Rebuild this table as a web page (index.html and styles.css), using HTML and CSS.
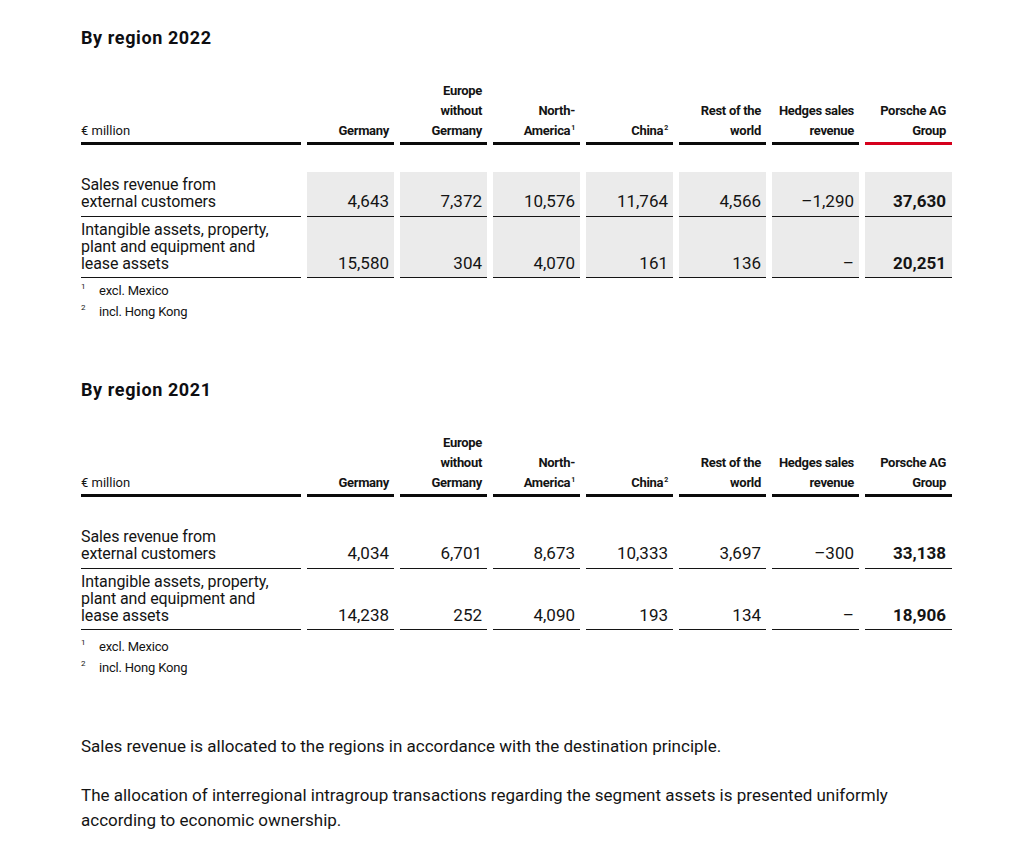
FILE: index.html
```html
<!DOCTYPE html>
<html lang="en">
<head>
<meta charset="utf-8">
<title>By region</title>
<link rel="stylesheet" href="styles.css">
</head>
<body>
<main class="page">
  <section class="region">
    <h2 class="title">By region 2022</h2>
    <div class="row head">
      <div class="cell label"><span>€ million</span></div>
      <div class="cell"><span>Germany</span></div>
      <div class="cell"><span>Europe<br>without<br>Germany</span></div>
      <div class="cell"><span>North-<br>America<sup>1</sup></span></div>
      <div class="cell"><span>China<sup>2</sup></span></div>
      <div class="cell"><span>Rest of the<br>world</span></div>
      <div class="cell"><span>Hedges sales<br>revenue</span></div>
      <div class="cell total red"><span>Porsche AG<br>Group</span></div>
    </div>
    <div class="row body first">
      <div class="cell label">Sales revenue from<br>external customers</div>
      <div class="cell shade">4,643</div>
      <div class="cell shade">7,372</div>
      <div class="cell shade">10,576</div>
      <div class="cell shade">11,764</div>
      <div class="cell shade">4,566</div>
      <div class="cell shade">–1,290</div>
      <div class="cell shade total">37,630</div>
    </div>
    <div class="row body">
      <div class="cell label">Intangible assets, property,<br>plant and equipment and<br>lease assets</div>
      <div class="cell shade">15,580</div>
      <div class="cell shade">304</div>
      <div class="cell shade">4,070</div>
      <div class="cell shade">161</div>
      <div class="cell shade">136</div>
      <div class="cell shade">–</div>
      <div class="cell shade total">20,251</div>
    </div>
    <ul class="notes">
      <li><span class="mark">1</span>excl. Mexico</li>
      <li><span class="mark">2</span>incl. Hong Kong</li>
    </ul>
  </section>

  <section class="region second">
    <h2 class="title">By region 2021</h2>
    <div class="row head">
      <div class="cell label"><span>€ million</span></div>
      <div class="cell"><span>Germany</span></div>
      <div class="cell"><span>Europe<br>without<br>Germany</span></div>
      <div class="cell"><span>North-<br>America<sup>1</sup></span></div>
      <div class="cell"><span>China<sup>2</sup></span></div>
      <div class="cell"><span>Rest of the<br>world</span></div>
      <div class="cell"><span>Hedges sales<br>revenue</span></div>
      <div class="cell total"><span>Porsche AG<br>Group</span></div>
    </div>
    <div class="row body first">
      <div class="cell label">Sales revenue from<br>external customers</div>
      <div class="cell">4,034</div>
      <div class="cell">6,701</div>
      <div class="cell">8,673</div>
      <div class="cell">10,333</div>
      <div class="cell">3,697</div>
      <div class="cell">–300</div>
      <div class="cell total">33,138</div>
    </div>
    <div class="row body">
      <div class="cell label">Intangible assets, property,<br>plant and equipment and<br>lease assets</div>
      <div class="cell">14,238</div>
      <div class="cell">252</div>
      <div class="cell">4,090</div>
      <div class="cell">193</div>
      <div class="cell">134</div>
      <div class="cell">–</div>
      <div class="cell total">18,906</div>
    </div>
    <ul class="notes later">
      <li><span class="mark">1</span>excl. Mexico</li>
      <li><span class="mark">2</span>incl. Hong Kong</li>
    </ul>
  </section>

  <section class="text">
    <p>Sales revenue is allocated to the regions in accordance with the destination principle.</p>
    <p>The allocation of interregional intragroup transactions regarding the segment assets is presented uniformly<br>according to economic ownership.</p>
  </section>
</main>
</body>
</html>
```

FILE: styles.css
```css
html, body {
  margin: 0;
  padding: 0;
  background: #ffffff;
}

body {
  font-family: Roboto, "Liberation Sans", Arial, sans-serif;
  color: #141414;
}

.page {
  padding: 28px 0 0 81px;
}

.title {
  margin: 0;
  font-size: 18px;
  line-height: 20px;
  font-weight: 700;
  letter-spacing: 0.6px;
  color: #0e0e12;
}

.row {
  display: grid;
  grid-template-columns: 220px repeat(7, 87px);
  column-gap: 6px;
}

.cell {
  display: flex;
  flex-direction: column;
  justify-content: flex-end;
  align-items: flex-end;
  text-align: right;
  white-space: nowrap;
}

.cell.label {
  align-items: flex-start;
  text-align: left;
}

/* header */
.head {
  margin-top: 33px;
}

.head .cell {
  font-size: 13px;
  line-height: 20px;
  font-weight: 700;
  letter-spacing: -0.3px;
  padding: 0 5px 1px 0;
  border-bottom: 3px solid #0a0a0a;
}

.head .cell.label {
  font-weight: 400;
  letter-spacing: 0;
  padding-right: 0;
}

.head .cell.red {
  border-bottom-color: #d5001c;
}

.head sup {
  font-size: 7px;
  line-height: 0;
  vertical-align: 5px;
  margin-left: 1px;
}

/* body rows */
.body .cell {
  font-size: 17px;
  line-height: 17px;
  padding: 4px 5px 5px 0;
  border-bottom: 1px solid #141414;
}

.body.first .cell {
  padding-bottom: 6px;
}

.body.first {
  margin-top: 27px;
}

.body .cell.label {
  font-size: 16px;
  padding-right: 0;
  letter-spacing: -0.1px;
}

.cell.shade {
  background: #ebebeb;
}

.cell.total {
  font-weight: 700;
}

.head .cell.total,
.body .cell.total {
  padding-right: 6px;
}

/* footnotes */
.notes {
  list-style: none;
  margin: 2px 0 0 0;
  padding: 0;
  font-size: 13px;
  line-height: 21px;
  letter-spacing: -0.2px;
}

.notes.later {
  margin-top: 6px;
}

.notes li {
  display: flex;
}

.mark {
  width: 18px;
  font-size: 8px;
  line-height: 14px;
}

.second {
  margin-top: 58px;
}

/* text */
.text {
  margin-top: 56px;
}

.text p {
  margin: 0 0 24px 0;
  font-size: 17px;
  line-height: 25px;
  letter-spacing: 0;
  color: #141414;
}
```
